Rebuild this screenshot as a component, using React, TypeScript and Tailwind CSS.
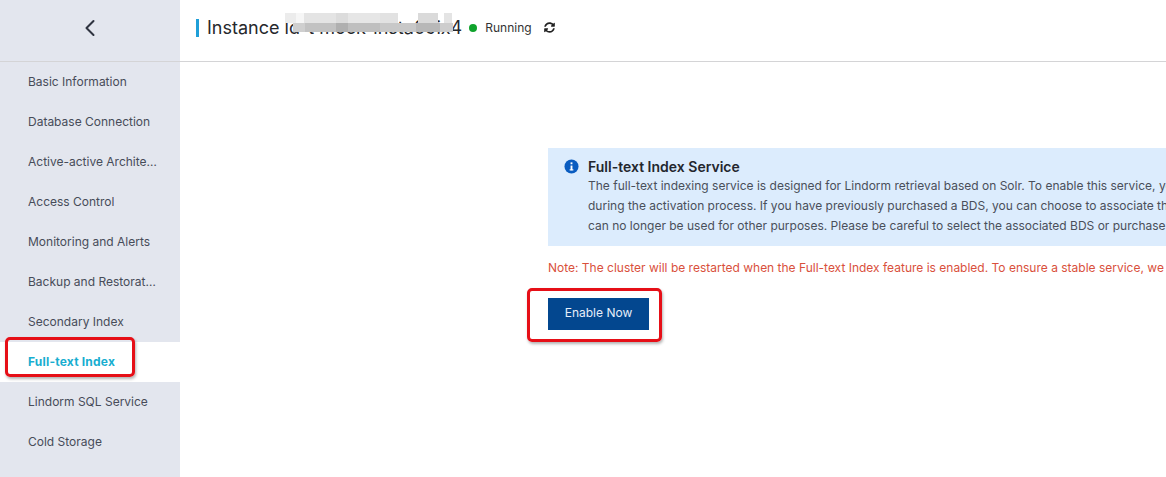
import { ChevronLeft } from "lucide-react";
import { FaSyncAlt } from "react-icons/fa";

const items = [
  "Basic Information",
  "Database Connection",
  "Active-active Architecture",
  "Access Control",
  "Monitoring and Alerts",
  "Backup and Restoration",
  "Secondary Index",
  "Full-text Index",
  "Lindorm SQL Service",
  "Cold Storage",
  "Cluster Management",
];

// Pixelated redaction over the instance name (x relative to the title block)
const blurBlocks = [
  { l: 89, t: -3, w: 11, h: 10, c: "#ececec" },
  { l: 100, t: -3, w: 8, h: 19, c: "#f6f6f6" },
  { l: 108, t: -3, w: 32, h: 10, c: "#e4e4e4" },
  { l: 140, t: -3, w: 12, h: 10, c: "#dcdcdc" },
  { l: 152, t: -3, w: 32, h: 10, c: "#e6e6e6" },
  { l: 184, t: -3, w: 18, h: 10, c: "#e2e2e2" },
  { l: 222, t: -3, w: 20, h: 10, c: "#dadada" },
  { l: 248, t: -3, w: 8, h: 10, c: "#e4e4e4" },
  { l: 97, t: 7, w: 12, h: 9, c: "#cfcfcf" },
  { l: 109, t: 7, w: 31, h: 9, c: "#c2c2c2" },
  { l: 140, t: 7, w: 12, h: 9, c: "#b0b0b0" },
  { l: 152, t: 7, w: 32, h: 9, c: "#bfbfbf" },
  { l: 184, t: 7, w: 36, h: 9, c: "#c8c8c8" },
  { l: 220, t: 7, w: 24, h: 9, c: "#b8b8b8" },
  { l: 244, t: 7, w: 13, h: 9, c: "#cdcdcd" },
];

export default function App() {
  return (
    <div className="relative flex h-[477px] w-[1166px] overflow-hidden bg-white font-['Inter',sans-serif] text-xs text-[#333]">
      <aside className="flex w-[180px] shrink-0 flex-col overflow-hidden bg-[#e3e6ee]">
        <div className="flex h-[62px] shrink-0 items-center justify-center border-b border-[#d4d4d6] pb-[6px]">
          <ChevronLeft className="h-7 w-7 text-[#2f3440]" strokeWidth={1.75} />
        </div>
        <nav className="flex flex-col">
          {items.map((item) => {
            const active = item === "Full-text Index";
            return (
              <div
                key={item}
                className={
                  active
                    ? "flex h-10 shrink-0 items-center bg-white pl-7 pr-6 text-xs font-bold tracking-[0.2px] text-[#18aed0]"
                    : "flex h-10 shrink-0 items-center pl-7 pr-[23px] text-xs text-[#474c59]"
                }
              >
                <span className="truncate">{item}</span>
              </div>
            );
          })}
        </nav>
      </aside>

      <main className="flex min-w-0 flex-1 flex-col overflow-hidden">
        <header className="flex h-[62px] shrink-0 items-center border-b border-[#d4d4d6] pb-[6px] pl-4">
          <div className="relative flex items-center">
            <span className="mr-2 h-[18px] w-[3px] bg-[#1f9fd8]" />
            <span className="text-lg leading-6 text-[#26282c]">Instance ld-t mock-insta09ix4</span>
            {blurBlocks.map((b, i) => (
              <span
                key={i}
                className="absolute"
                style={{ left: b.l, top: b.t, width: b.w, height: b.h, backgroundColor: b.c }}
              />
            ))}
          </div>
          <span className="ml-[7px] h-2 w-2 rounded-full bg-[#0fa32c]" />
          <span className="ml-2 text-xs text-[#333]">Running</span>
          <FaSyncAlt className="ml-3 h-[11px] w-[11px] text-[#222]" />
        </header>

        <section className="pl-[368px] pt-[86px]">
          <div className="w-[900px]">
            <div className="flex h-[98px] gap-[9px] bg-[#dcecfd] pl-[16px] pt-[10px]">
              <svg viewBox="0 0 16 16" className="mt-[1px] h-[15px] w-[15px] shrink-0">
                <circle cx="8" cy="8" r="7.5" fill="#0a5cc0" />
                <rect x="7" y="7" width="2" height="5" fill="#fff" />
                <rect x="6" y="11" width="4" height="1.2" fill="#fff" />
                <rect x="7" y="3.6" width="2" height="2" fill="#fff" />
              </svg>
              <div className="whitespace-nowrap">
                <div className="text-sm leading-[18px] font-semibold text-[#23262e]">Full-text Index Service</div>
                <div className="text-xs leading-5 text-[#4a4f5a]">
                  <div>The full-text indexing service is designed for Lindorm retrieval based on Solr. To enable this service, you need to purchase a BDS</div>
                  <div>during the activation process. If you have previously purchased a BDS, you can choose to associate the existing BDS. The associated BDS</div>
                  <div>can no longer be used for other purposes. Please be careful to select the associated BDS or purchase a new one.</div>
                </div>
              </div>
            </div>
            <p className="mt-[14px] whitespace-nowrap text-xs leading-4 text-[#d9503c]">
              Note: The cluster will be restarted when the Full-text Index feature is enabled. To ensure a stable service, we recommend that you enable it during off-peak hours.
            </p>
            <button className="mt-[22px] flex h-8 w-[101px] items-center justify-center bg-[#03478f] pb-[2px] text-xs text-[#e6eefa]">
              Enable Now
            </button>
          </div>
        </section>
      </main>

      <div className="absolute left-[5px] top-[337px] h-10 w-[130px] rounded-[5px] border-[3px] border-[#e60f17] shadow-[1px_2px_3px_rgba(0,0,0,0.3)]" />
      <div className="absolute left-[527px] top-[288px] h-[54px] w-[135px] rounded-[5px] border-[3px] border-[#e60f17] shadow-[1px_2px_3px_rgba(0,0,0,0.3)]" />
    </div>
  );
}
